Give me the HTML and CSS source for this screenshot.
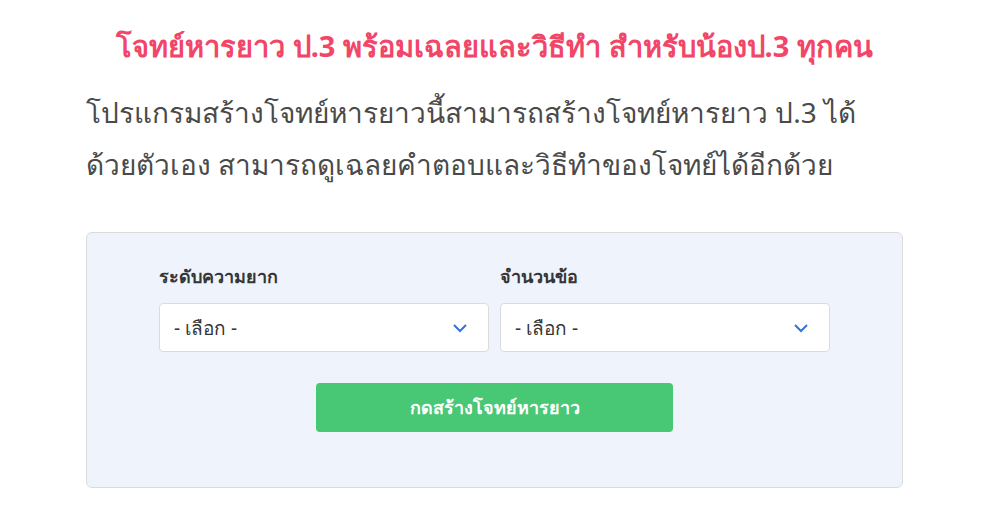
FILE: index.html
```html
<!DOCTYPE html>
<html>
<head>
  <meta charset="UTF-8">
  <title>โจทย์หารยาว ป.3</title>
  <link rel="stylesheet" href="styles.css">
</head>
<body>
<div class="container">
  <h1 class="title">โจทย์หารยาว ป.3 พร้อมเฉลยและวิธีทำ สำหรับน้องป.3 ทุกคน</h1>
  <p class="intro">โปรแกรมสร้างโจทย์หารยาวนี้สามารถสร้างโจทย์หารยาว ป.3 ได้ด้วยตัวเอง สามารถดูเฉลยคำตอบและวิธีทำของโจทย์ได้อีกด้วย</p>

  <div class="form-box">
    <div class="fields">
      <div class="field">
        <label class="label">ระดับความยาก</label>
        <div class="select">
          <span>- เลือก -</span>
          <svg class="chevron" viewBox="0 0 16 10" width="16" height="10">
            <path d="M2 2 L8 8 L14 2" fill="none" stroke="#3273dc" stroke-width="2"/>
          </svg>
        </div>
      </div>
      <div class="field">
        <label class="label">จำนวนข้อ</label>
        <div class="select">
          <span>- เลือก -</span>
          <svg class="chevron" viewBox="0 0 16 10" width="16" height="10">
            <path d="M2 2 L8 8 L14 2" fill="none" stroke="#3273dc" stroke-width="2"/>
          </svg>
        </div>
      </div>
    </div>
    <div class="button-row">
      <button class="make-button">กดสร้างโจทย์หารยาว</button>
    </div>
  </div>
</div>
</body>
</html>
```

FILE: styles.css
```css
body {
  margin: 0;
  background: #fff;
  font-family: "Noto Sans", sans-serif;
  color: #4a4a4a;
}

.container {
  width: 817px;
  margin-left: 86px;
  padding-top: 26px;
}

.title {
  margin: 0;
  text-align: center;
  font-size: 29px;
  font-weight: bold;
  color: #f14668;
  line-height: 40px;
}

.intro {
  margin: 20px 0 0;
  font-size: 28px;
  line-height: 52px;
  color: #4a4a4a;
  padding-right: 40px;
}

.form-box {
  margin-top: 42px;
  background: #eef3fc;
  border: 1px solid #dbdbdb;
  border-radius: 6px;
  padding: 28px 72px 55px;
}

.fields {
  display: flex;
  justify-content: center;
  gap: 11px;
}

.field {
  width: 330px;
}

.label {
  display: block;
  font-size: 18px;
  font-weight: bold;
  color: #363636;
  line-height: 30px;
  margin-bottom: 12px;
}

.select {
  height: 47px;
  background: #fff;
  border: 1px solid #dbdbdb;
  border-radius: 4px;
  display: flex;
  align-items: center;
  justify-content: space-between;
  padding: 0 20px 0 14px;
  font-size: 19px;
  color: #363636;
}

.chevron {
  display: block;
}

.button-row {
  display: flex;
  justify-content: center;
  margin-top: 31px;
}

.make-button {
  width: 357px;
  height: 49px;
  background: #48c774;
  border: none;
  border-radius: 4px;
  color: #fff;
  font-family: inherit;
  font-size: 18px;
  font-weight: bold;
  cursor: pointer;
}
```
